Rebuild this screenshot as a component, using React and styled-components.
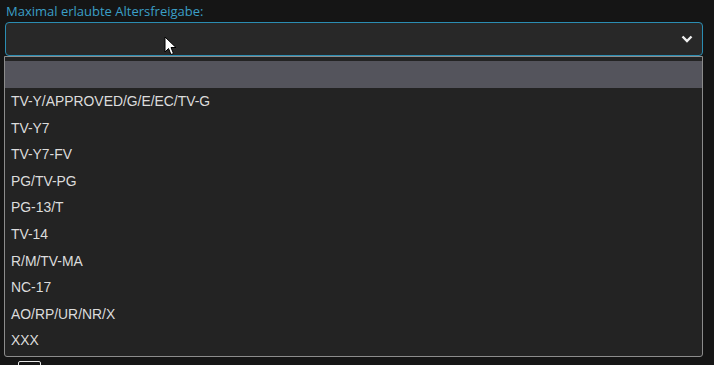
import React from "react";
import styled, { createGlobalStyle } from "styled-components";

const Global = createGlobalStyle`
  html, body {
    margin: 0;
    background: #151515;
    height: 100%;
    overflow: hidden;
  }
`;

const Page = styled.div`
  position: relative;
  padding: 3px 11px 0 5px;
  font-family: "Open Sans", "Noto Sans", sans-serif;
`;
const Label = styled.div`
  color: #3b9fc6;
  font-size: 13px;
  line-height: 17px;
  padding-left: 1px;
  margin-bottom: 2px;
`;
const Field = styled.div`
  position: relative;
`;
const SelectBox = styled.div`
  height: 32px;
  box-sizing: content-box;
  border: 1px solid #2b8db2;
  border-radius: 4px;
  background: #282828;
  display: flex;
  align-items: center;
  justify-content: flex-end;
  padding-right: 9px;
`;
const Menu = styled.ul`
  position: absolute;
  top: 34px;
  left: -1px;
  right: 0;
  margin: 0;
  padding: 4px 0 2px;
  list-style: none;
  background: #232323;
  border: 1px solid #8c8c8c;
  border-radius: 0 0 3px 3px;
  z-index: 2;
`;
const Option = styled.li`
  height: ${p => (p.$first ? "27px" : "26.6px")};
  line-height: ${p => (p.$first ? "27px" : "26.6px")};
  padding-left: 6px;
  font-family: "Liberation Sans", Arial, sans-serif;
  font-size: 13.9px;
  color: #dcdcdc;
  background: ${p => (p.$active ? "#54545c" : "transparent")};
  white-space: nowrap;
`;
const CheckRow = styled.div`
  margin-top: 305px;
  padding-left: 13px;
`;
const Check = styled.span`
  display: block;
  width: 21px;
  height: 21px;
  border: 1px solid #e6e6e6;
  border-radius: 2px;
`;
const Cursor = styled.svg`
  position: absolute;
  left: 164px;
  top: 36px;
  z-index: 3;
`;

const options = [
  "",
  "TV-Y/APPROVED/G/E/EC/TV-G",
  "TV-Y7",
  "TV-Y7-FV",
  "PG/TV-PG",
  "PG-13/T",
  "TV-14",
  "R/M/TV-MA",
  "NC-17",
  "AO/RP/UR/NR/X",
  "XXX",
];

export default function App() {
  return (
    <>
      <Global />
      <Page>
        <Label>Maximal erlaubte Altersfreigabe:</Label>
        <Field>
          <SelectBox>
            <svg width="12" height="8" viewBox="0 0 12 8">
              <polyline points="1.5,1.5 6,6 10.5,1.5" fill="none" stroke="#f0f0f0" strokeWidth="2.4" />
            </svg>
          </SelectBox>
          <Menu>
            {options.map((o, i) => (
              <Option key={i} $first={i === 0} $active={i === 0}>{o}</Option>
            ))}
          </Menu>
        </Field>
        <CheckRow>
          <Check />
        </CheckRow>
        <Cursor width="13" height="20" viewBox="0 0 13 20">
          <path d="M1 1 L1 16 L4.5 12.5 L7 18.5 L9.5 17.5 L7 11.5 L12 11.5 Z" fill="#fff" stroke="#000" strokeWidth="1" />
        </Cursor>
      </Page>
    </>
  );
}
